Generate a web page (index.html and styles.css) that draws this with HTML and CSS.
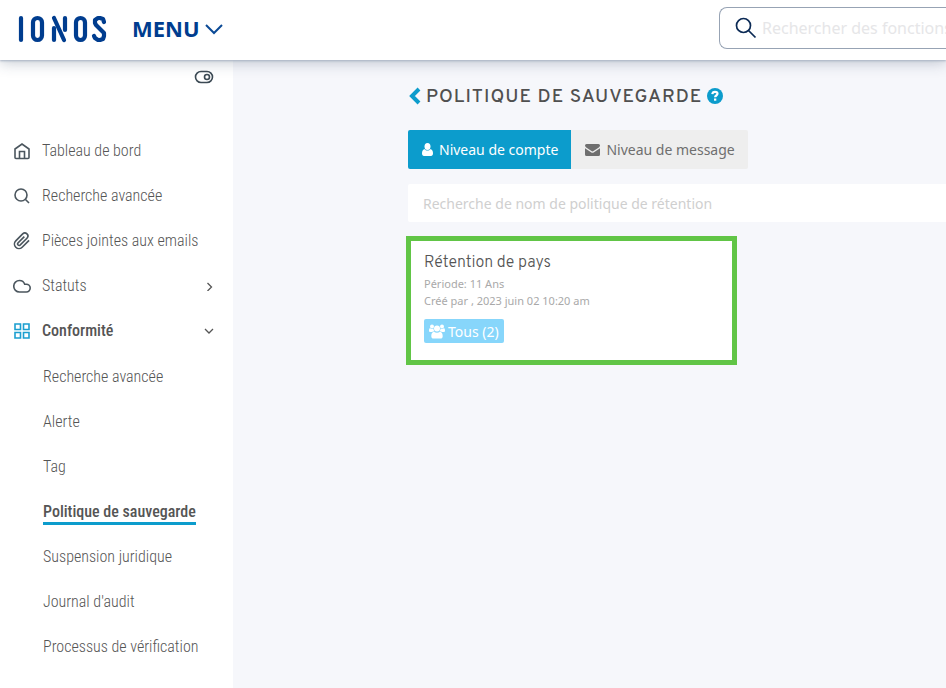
FILE: index.html
```html
<!DOCTYPE html>
<html lang="fr">
<head>
<meta charset="utf-8">
<meta name="viewport" content="width=device-width, initial-scale=1">
<title>Politique de sauvegarde</title>
<link rel="stylesheet" href="styles.css">
</head>
<body>
<header class="topbar">
  <a class="logo" href="#" aria-label="IONOS">
    <svg width="90" height="28" viewBox="0 0 90 28" fill="none" stroke="#003d8f" stroke-width="4.200" stroke-linecap="round" stroke-linejoin="round">
      <line x1="3" y1="3" x2="3" y2="25"/>
      <rect x="15" y="3" width="9" height="22" rx="4.500"/>
      <line x1="36" y1="13" x2="36" y2="25"/>
      <line x1="36" y1="3" x2="46" y2="25"/>
      <line x1="47" y1="3" x2="47" y2="15"/>
      <rect x="58" y="3" width="9" height="22" rx="4.500"/>
      <polyline points="86,7 85,4 82,3 80,3 77,5 77,8 78,10 86,18 86,21 85,24 82,25 80,25 77,23 76,21"/>
    </svg>
  </a>
  <button class="menu" type="button">MENU
    <svg width="18" height="12" viewBox="0 0 18 12" fill="none" stroke="#0b4a96" stroke-width="2"><path d="M1 2l8 8 8-8"/></svg>
  </button>
  <label class="site-search">
    <svg width="22" height="22" viewBox="0 0 22 22" fill="none" stroke="#0b2a55" stroke-width="1.700"><circle cx="8.500" cy="8.500" r="7"/><path d="M13.500 13.500l7 7"/></svg>
    <input type="text" placeholder="Rechercher des fonctions" aria-label="Rechercher des fonctions">
  </label>
</header>
<div class="layout">
  <aside class="sidebar">
    <button class="collapse" type="button" aria-label="Réduire le menu">
      <svg width="20" height="14" viewBox="0 0 20 14" fill="none" stroke="#3c4a54" stroke-width="1.600"><rect x="1.500" y="1.500" width="17" height="11" rx="5.500"/><circle cx="13" cy="7" r="2.500"/></svg>
    </button>
    <nav>
      <ul class="nav">
        <li><a class="item" href="#"><svg class="ico" viewBox="0 0 18 18"><path d="M2 7l7-5 7 5v8.500a1 1 0 0 1-1 1H3a1 1 0 0 1-1-1z"/><path d="M6.500 16V9.500h5V16"/></svg>Tableau de bord</a></li>
        <li><a class="item" href="#"><svg class="ico" viewBox="0 0 18 18"><circle cx="8" cy="8" r="6"/><path d="M12.500 12.500l3.500 3.500"/></svg>Recherche avancée</a></li>
        <li><a class="item" href="#"><svg class="ico clip" viewBox="0 0 24 24"><path d="M21.400 11.100l-9.200 9.200a6 6 0 0 1-8.500-8.500l9.200-9.200a4 4 0 0 1 5.700 5.700l-9.200 9.200a2 2 0 0 1-2.800-2.800l8.500-8.500"/></svg>Pièces jointes aux emails</a></li>
        <li><a class="item" href="#"><svg class="ico" viewBox="0 0 18 18"><path d="M6.500 3.500a5.500 5.500 0 0 1 5.200 3.700h1.600a3.900 3.900 0 0 1 0 7.800H6.500a5.750 5.750 0 0 1 0-11.500z"/></svg>Statuts<svg class="chev" viewBox="0 0 10 10"><path d="M3.500 2l4 4-4 4"/></svg></a></li>
        <li><a class="item open" href="#"><svg class="ico" viewBox="0 0 18 18"><path d="M2 2h5.500v5.500H2zM10.500 2H16v5.500h-5.500zM2 10.500h5.500V16H2zM10.500 10.500H16V16h-5.500z"/></svg>Conformité<svg class="chev" viewBox="0 0 10 10"><path d="M1 3l4 4 4-4"/></svg></a>
          <ul class="sub">
            <li><a href="#">Recherche avancée</a></li>
            <li><a href="#">Alerte</a></li>
            <li><a href="#">Tag</a></li>
            <li><a class="current" href="#" aria-current="page">Politique de sauvegarde</a></li>
            <li><a href="#">Suspension juridique</a></li>
            <li><a href="#">Journal d'audit</a></li>
            <li><a href="#">Processus de vérification</a></li>
          </ul>
        </li>
      </ul>
    </nav>
  </aside>
  <main class="content">
    <div class="heading">
      <a class="back" href="#" aria-label="Retour"><svg width="13" height="18" viewBox="0 0 13 18" fill="none" stroke="#0c9ccc" stroke-width="4"><path d="M11 2L4 9l7 7"/></svg></a>
      <h1>POLITIQUE DE SAUVEGARDE</h1>
      <a class="help" href="#" aria-label="Aide"><svg width="16" height="16" viewBox="0 0 16 16"><circle cx="8" cy="8" r="8" fill="#0c9ccc"/><path d="M5.300 6.200C5.500 4.500 6.700 3.800 8 3.800c1.500 0 2.500.8 2.500 2 0 1.700-2.400 1.700-2.400 3.500" fill="none" stroke="#fff" stroke-width="2.200"/><path d="M7 10.500h2.300v2.200H7z" fill="#fff"/></svg></a>
    </div>
    <div class="tabs">
      <button class="tab active" type="button"><svg width="11" height="13" viewBox="0 0 11 13" fill="currentColor"><ellipse cx="5.500" cy="3.500" rx="3" ry="3.500"/><path d="M2.500 6c-2 .5-2.500 2.500-2.500 4.500C0 12 .8 13 2 13h7c1.200 0 2-1 2-2.500C11 8.500 10.500 6.500 8.500 6c-1.500 2-4.500 2-6 0z"/></svg>Niveau de compte</button>
      <button class="tab" type="button"><svg width="15" height="12" viewBox="0 0 15 12" fill="currentColor"><path d="M1.500 0h12A1.500 1.500 0 0 1 15 1.500c0 .8-.5 1.500-1.200 2L8.500 7c-.7.500-1.300.5-2 0L1.200 3.500C.5 3 0 2.300 0 1.500A1.500 1.500 0 0 1 1.500 0z"/><path d="M0 4.200l6 4c1 .7 2 .7 3 0l6-4v6.300a1.500 1.500 0 0 1-1.500 1.500h-12A1.500 1.500 0 0 1 0 10.500z"/></svg>Niveau de message</button>
    </div>
    <input class="policy-search" type="text" placeholder="Recherche de nom de politique de rétention" aria-label="Recherche de nom de politique de rétention">
    <article class="card">
      <h2>Rétention de pays</h2>
      <p>Période: 11 Ans</p>
      <p>Créé par , 2023 juin 02 10:20 am</p>
      <span class="badge"><svg width="16" height="15" viewBox="0 0 16 15" fill="currentColor"><circle cx="3" cy="2.500" r="2"/><circle cx="13" cy="2.500" r="2"/><circle cx="8" cy="4.500" r="3"/><path d="M1 4c.8 1 2.500 1.200 3.500.5 0 1.200.3 2 1 2.800C4.300 7.300 3.500 7.500 3 8H1.500C.5 8 0 7.500 0 6.500S.3 4.500 1 4zM15 4c-.8 1-2.500 1.200-3.500.5 0 1.200-.3 2-1 2.800 1.200 0 2 .2 2.500.7h1.500c1 0 1.500-.5 1.500-1.500S15.700 4.500 15 4zM5 7.800c1.800 1.300 4.200 1.300 6 0 2 .2 2.700 2.200 2.700 4.400 0 1.600-.9 2.300-2.200 2.300h-7c-1.300 0-2.200-.7-2.200-2.300C2.300 10 3 8 5 7.800z"/></svg>Tous (2)</span>
    </article>
  </main>
</div>
</body>
</html>
```

FILE: styles.css
```css
* { box-sizing: border-box; }
body {
  margin: 0;
  min-height: 100vh;
  display: flex;
  flex-direction: column;
  background: #f6f7fb;
  font-family: "Noto Sans", sans-serif;
  font-size: 14px;
  color: #555;
}
a { color: inherit; text-decoration: none; }
button { border: 0; background: none; padding: 0; font: inherit; color: inherit; }
ul { list-style: none; margin: 0; padding: 0; }
svg { flex: none; display: block; }
h1, h2, p { margin: 0; }

.topbar {
  position: relative;
  display: flex;
  align-items: center;
  height: 60px;
  padding: 0 0 4px 18px;
  background: #fff;
  box-shadow: 0 1px 2px #a9b3c3, 0 2px 14px rgba(40, 60, 90, 0.3);
}
.logo { padding-top: 2px; }
.menu {
  display: flex;
  align-items: center;
  gap: 5px;
  margin-left: 24px;
  font: 700 22px/28px "Open Sans", sans-serif;
  color: #003d8f;
}
.menu svg { margin-top: 2px; }
.site-search {
  display: flex;
  align-items: center;
  gap: 5px;
  width: 227px;
  height: 42px;
  margin-left: auto;
  padding-left: 15px;
  border: 1px solid #97a3b4;
  border-right: 0;
  border-radius: 8px 0 0 8px;
}
.site-search input {
  flex: 1;
  min-width: 0;
  padding: 0;
  border: 0;
  background: none;
  outline: 0;
  font: 16px/24px "Noto Sans", sans-serif;
}
.site-search input::placeholder { color: #e6e6e8; opacity: 1; }

.layout { display: flex; flex: 1; }
.sidebar {
  width: 233px;
  flex: none;
  padding: 10px 19px 18px 13px;
  background: #fff;
  font: 300 16px/20px "Roboto Condensed", Roboto, sans-serif;
}
.collapse { display: block; margin: 0 0 0 auto; }
.nav { padding-top: 44px; }
.item { display: flex; align-items: center; height: 45px; gap: 11px; }
.ico { width: 18px; height: 18px; fill: none; stroke: #4b565e; stroke-width: 1.600; }
.clip { stroke-width: 2.200; }
.open { font-weight: 500; }
.open .ico { stroke: #1b9fd0; }
.chev { width: 10px; height: 10px; margin-left: auto; fill: none; stroke: #555; stroke-width: 1.300; }
.sub { padding: 1px 0 0 30px; }
.sub li { display: flex; align-items: center; height: 45px; }
.sub .current { padding-top: 3px; font-weight: 500; border-bottom: 3px solid #0c9ccc; }

.content { flex: 1; min-width: 0; padding: 24px 0 0 175px; }
.heading { display: flex; align-items: center; gap: 5px; height: 24px; }
h1 {
  padding-top: 2px;
  font: 500 19px/24px Overpass, Roboto, sans-serif;
  letter-spacing: 1px;
  color: #505050;
}
.tabs { display: flex; margin-top: 22px; }
.tab {
  display: flex;
  align-items: center;
  gap: 6px;
  height: 39px;
  padding: 0 13px 0 14px;
  background: #eee;
  color: #6f6f6f;
  border-radius: 0 2px 2px 0;
}
.active { background: #0c9ccc; color: #fff; border-radius: 2px 0 0 2px; }
.policy-search {
  display: block;
  width: 100%;
  height: 38px;
  margin-top: 15px;
  padding: 0 15px;
  border: 0;
  border-radius: 2px 0 0 2px;
  background: #fff;
  font: 14px/20px "Noto Sans", sans-serif;
}
.policy-search::placeholder { color: #cfcfcf; opacity: 1; }
.card {
  width: 331px;
  margin: 14px 0 0 -2px;
  padding: 10px 13px 17px;
  border: 5px solid #61c546;
  background: #fff;
}
h2 { font: 300 16px/24px Overpass, Roboto, sans-serif; }
.card p { font-size: 11px; line-height: 17px; color: #a9a9a9; }
.badge {
  display: inline-flex;
  align-items: center;
  gap: 3px;
  height: 24px;
  margin-top: 10px;
  padding: 0 5px;
  border-radius: 2px;
  background: #87d6fb;
  color: #fff;
}
```
